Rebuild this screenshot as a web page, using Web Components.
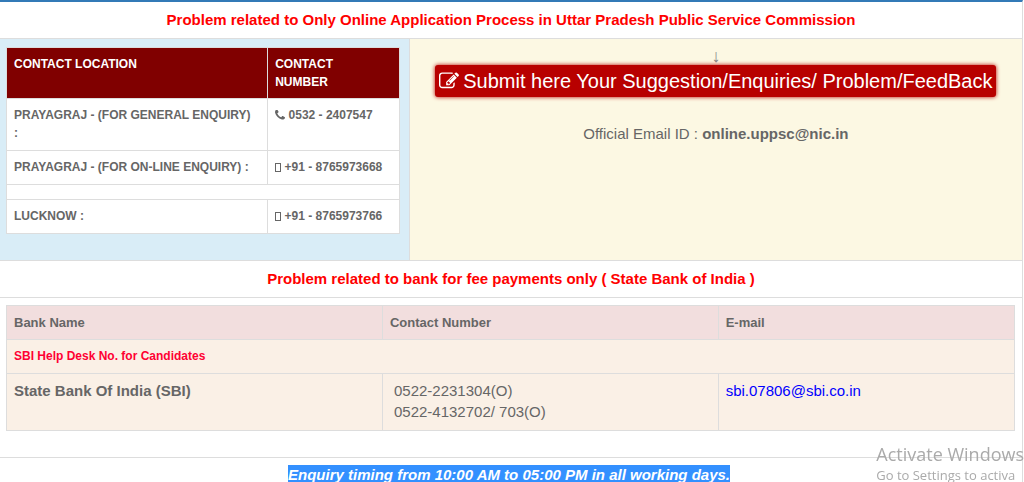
<!DOCTYPE html>
<html lang="en">
<head>
<meta charset="utf-8">
<meta name="viewport" content="width=device-width, initial-scale=1">
<title>Contact</title>
<style>
body {
    margin: 0;
    overflow: hidden;
    background: #fff;
    color: #666;
    font: 15px/21px "Liberation Sans", Arial, sans-serif;
}
</style>
</head>
<body>
<help-page>
    <section-heading>Problem related to Only Online Application Process in Uttar Pradesh Public Service Commission</section-heading>
    <support-columns>
        <contact-table slot="contacts"></contact-table>
        <feedback-panel slot="feedback" email="online.uppsc@nic.in">Submit here Your Suggestion/Enquiries/ Problem/FeedBack</feedback-panel>
    </support-columns>
    <section-heading>Problem related to bank for fee payments only ( State Bank of India )</section-heading>
    <bank-table></bank-table>
    <timing-note>Enquiry timing from 10:00 AM to 05:00 PM in all working days.</timing-note>
</help-page>
<activation-notice>
    <span slot="title">Activate Windows</span>
    Go to Settings to activa
</activation-notice>

<script>
const icons = {
    edit: ['0 0 1792 1792', 'M888 1184l116-116-152-152-116 116v56h96v96h56zm440-720q-16-16-33 1l-350 350q-17 17-1 33t33-1l350-350q17-17 1-33zm80 594v190q0 119-84.5 203.5t-203.5 84.5h-832q-119 0-203.5-84.5t-84.5-203.5v-832q0-119 84.5-203.5t203.5-84.5h832q63 0 117 25 15 7 18 23 3 17-9 29l-49 49q-14 14-32 8-23-6-45-6h-832q-66 0-113 47t-47 113v832q0 66 47 113t113 47h832q66 0 113-47t47-113v-126q0-13 9-22l64-64q15-15 35-7t20 29zm-96-738l288 288-672 672h-288v-288zm444 132l-92 92-288-288 92-92q28-28 68-28t68 28l152 152q28 28 28 68t-28 68z'],
    phone: ['192 192 1408 1408', 'M1600 1240q0 27-10 70.5t-21 68.5q-21 50-122 106-94 51-186 51-27 0-53-3.5t-57.5-12.5-47-14.5-55.5-20.5-49-18q-98-35-175-83-127-79-264-216t-216-264q-48-77-83-175-3-9-18-49t-20.5-55.5-14.5-47-12.5-57.5-3.5-53q0-92 51-186 56-101 106-122 25-11 68.5-21t70.5-10q14 0 21 3 18 6 53 76 11 19 30 54t35 63.5 31 53.5q3 4 17.5 25t21.5 35.5 7 28.5q0 20-28.5 50t-62 55-62 53-28.5 46q0 9 5 22.5t8.5 20.5 14 24 11.5 19q76 137 174 235t235 174q2 1 19 11.5t24 14 20.5 8.5 22.5 5q18 0 46-28.5t53-62 55-62 50-28.5q14 0 28.5 7t35.5 21.5 25 17.5q25 15 53.5 31t63.5 35 54 30q70 35 76 53 3 7 3 21z'],
    mobile: ['0 0 6 9', 'M0 0h6v9H0zM1 1v7h4V1z']
};

// Attaches an open shadow root filled with the given markup
function render(host, html) {
    const template = document.createElement('template');
    template.innerHTML = html;
    host.attachShadow({ mode: 'open' }).appendChild(template.content.cloneNode(true));
}

class FaIcon extends HTMLElement {
    connectedCallback() {
        if (this.shadowRoot) return;
        const [box, path] = icons[this.getAttribute('name')];
        render(this, `
<style>
:host { display: inline-block; width: 10px; height: 10px; }
svg { display: block; width: 100%; height: 100%; fill: currentColor; fill-rule: evenodd; }
</style>
<svg viewBox="${box}" aria-hidden="true"><path d="${path}"/></svg>`);
    }
}

class HelpPage extends HTMLElement {
    constructor() {
        super();
        render(this, `
<style>
:host { display: block; margin-right: 1px; border-top: 2px solid #337ab7; border-right: 1px solid #ddd; }
</style>
<slot></slot>`);
    }
}

class SectionHeading extends HTMLElement {
    constructor() {
        super();
        render(this, `
<style>
:host { display: block; border-bottom: 1px solid #ddd; }
h2 { margin: 0; padding: 7px 8px 8px; color: #f00; font-size: 15px; line-height: 21px; text-align: center; }
</style>
<h2><slot></slot></h2>`);
    }
}

class SupportColumns extends HTMLElement {
    constructor() {
        super();
        render(this, `
<style>
:host { display: grid; grid-template-columns: 2fr 3fr; border-bottom: 1px solid #ddd; }
.contacts { padding: 8px 9px 26px 6px; background: #d9edf7; }
.feedback { padding: 8px; border-left: 1px solid #ddd; background: #fcf8e3; }
</style>
<div class="contacts"><slot name="contacts"></slot></div>
<div class="feedback"><slot name="feedback"></slot></div>`);
    }
}

class ContactTable extends HTMLElement {
    constructor() {
        super();
        render(this, `
<style>
:host { display: block; }
table { width: 100%; border-collapse: collapse; table-layout: fixed; background: #fff; font-size: 12px; line-height: 18px; font-weight: bold; }
th, td { padding: 7px; border: 1px solid #ddd; text-align: left; vertical-align: top; }
td { padding-bottom: 8px; }
th { background: #800000; color: #fff; }
.location { width: 66.5%; }
.spacer { padding: 7px; line-height: 0; }
fa-icon { vertical-align: -1px; }
fa-icon[name="mobile"] { width: 6px; height: 9px; }
</style>
<table>
<colgroup><col class="location"><col></colgroup>
<thead>
<tr><th>CONTACT LOCATION</th><th>CONTACT<br>NUMBER</th></tr>
</thead>
<tbody>
<tr><td>PRAYAGRAJ - (FOR GENERAL ENQUIRY)<br>:</td><td><fa-icon name="phone"></fa-icon> 0532 - 2407547</td></tr>
<tr><td>PRAYAGRAJ - (FOR ON-LINE ENQUIRY) :</td><td><fa-icon name="mobile"></fa-icon> +91 - 8765973668</td></tr>
<tr><td class="spacer" colspan="2"></td></tr>
<tr><td>LUCKNOW :</td><td><fa-icon name="mobile"></fa-icon> +91 - 8765973766</td></tr>
</tbody>
</table>`);
    }
}

class FeedbackPanel extends HTMLElement {
    constructor() {
        super();
        render(this, `
<style>
:host { display: flex; flex-direction: column; align-items: center; }
.arrow { color: #888; font-size: 18px; line-height: 18px; }
a { display: flex; align-items: center; gap: 4px; padding: 4px; border-radius: 3px; background: #b80000; box-shadow: 0 0 4px #b80000; color: #fff; font-size: 20px; line-height: 24px; text-decoration: none; white-space: nowrap; }
fa-icon { width: 20px; height: 20px; }
p { margin: 26px 0 0; }
</style>
<span class="arrow">↓</span>
<a href="#feedback"><fa-icon name="edit"></fa-icon><span><slot></slot></span></a>
<p>Official Email ID : <b></b></p>`);
        this.shadowRoot.querySelector('b').textContent = this.getAttribute('email');
    }
}

class BankTable extends HTMLElement {
    constructor() {
        super();
        render(this, `
<style>
:host { display: block; padding: 7px 7px 26px 6px; border-bottom: 1px solid #ddd; }
table { width: 100%; border-collapse: collapse; table-layout: fixed; background: #faf0e6; }
th, td { padding: 6px 7px; border: 1px solid #ddd; text-align: left; vertical-align: top; }
th { background: #f2dede; font-size: 13px; }
td { padding-bottom: 8px; }
.desk { color: #ff0033; font-size: 12px; font-weight: bold; padding-bottom: 6px; }
.numbers { padding-left: 11px; }
.name { width: 37.3%; }
.phone { width: 33.3%; }
a { color: #00f; text-decoration: none; }
</style>
<table>
<colgroup><col class="name"><col class="phone"><col></colgroup>
<thead>
<tr><th>Bank Name</th><th>Contact Number</th><th>E-mail</th></tr>
</thead>
<tbody>
<tr><td class="desk" colspan="3">SBI Help Desk No. for Candidates</td></tr>
<tr>
<td><b>State Bank Of India (SBI)</b></td>
<td class="numbers">0522-2231304(O)<br>0522-4132702/ 703(O)</td>
<td><a href="mailto:sbi.07806@sbi.co.in">sbi.07806@sbi.co.in</a></td>
</tr>
</tbody>
</table>`);
    }
}

class TimingNote extends HTMLElement {
    constructor() {
        super();
        render(this, `
<style>
:host { display: block; padding: 6px 12px 0 8px; text-align: center; }
em { padding: 1px 0; background: #3390ff; color: #fff; font-weight: bold; }
</style>
<em><slot></slot></em>`);
    }
}

// Desktop notice that floats above the page corner
class ActivationNotice extends HTMLElement {
    constructor() {
        super();
        render(this, `
<style>
:host { position: fixed; right: 0; bottom: -2px; color: #aaa; font: 13px/18px "Open Sans", "Noto Sans", sans-serif; white-space: nowrap; pointer-events: none; }
.title { font-size: 18px; line-height: 24px; }
</style>
<div class="title"><slot name="title"></slot></div>
<div><slot></slot></div>`);
    }
}

customElements.define('fa-icon', FaIcon);
customElements.define('help-page', HelpPage);
customElements.define('section-heading', SectionHeading);
customElements.define('support-columns', SupportColumns);
customElements.define('contact-table', ContactTable);
customElements.define('feedback-panel', FeedbackPanel);
customElements.define('bank-table', BankTable);
customElements.define('timing-note', TimingNote);
customElements.define('activation-notice', ActivationNotice);
</script>
</body>
</html>
